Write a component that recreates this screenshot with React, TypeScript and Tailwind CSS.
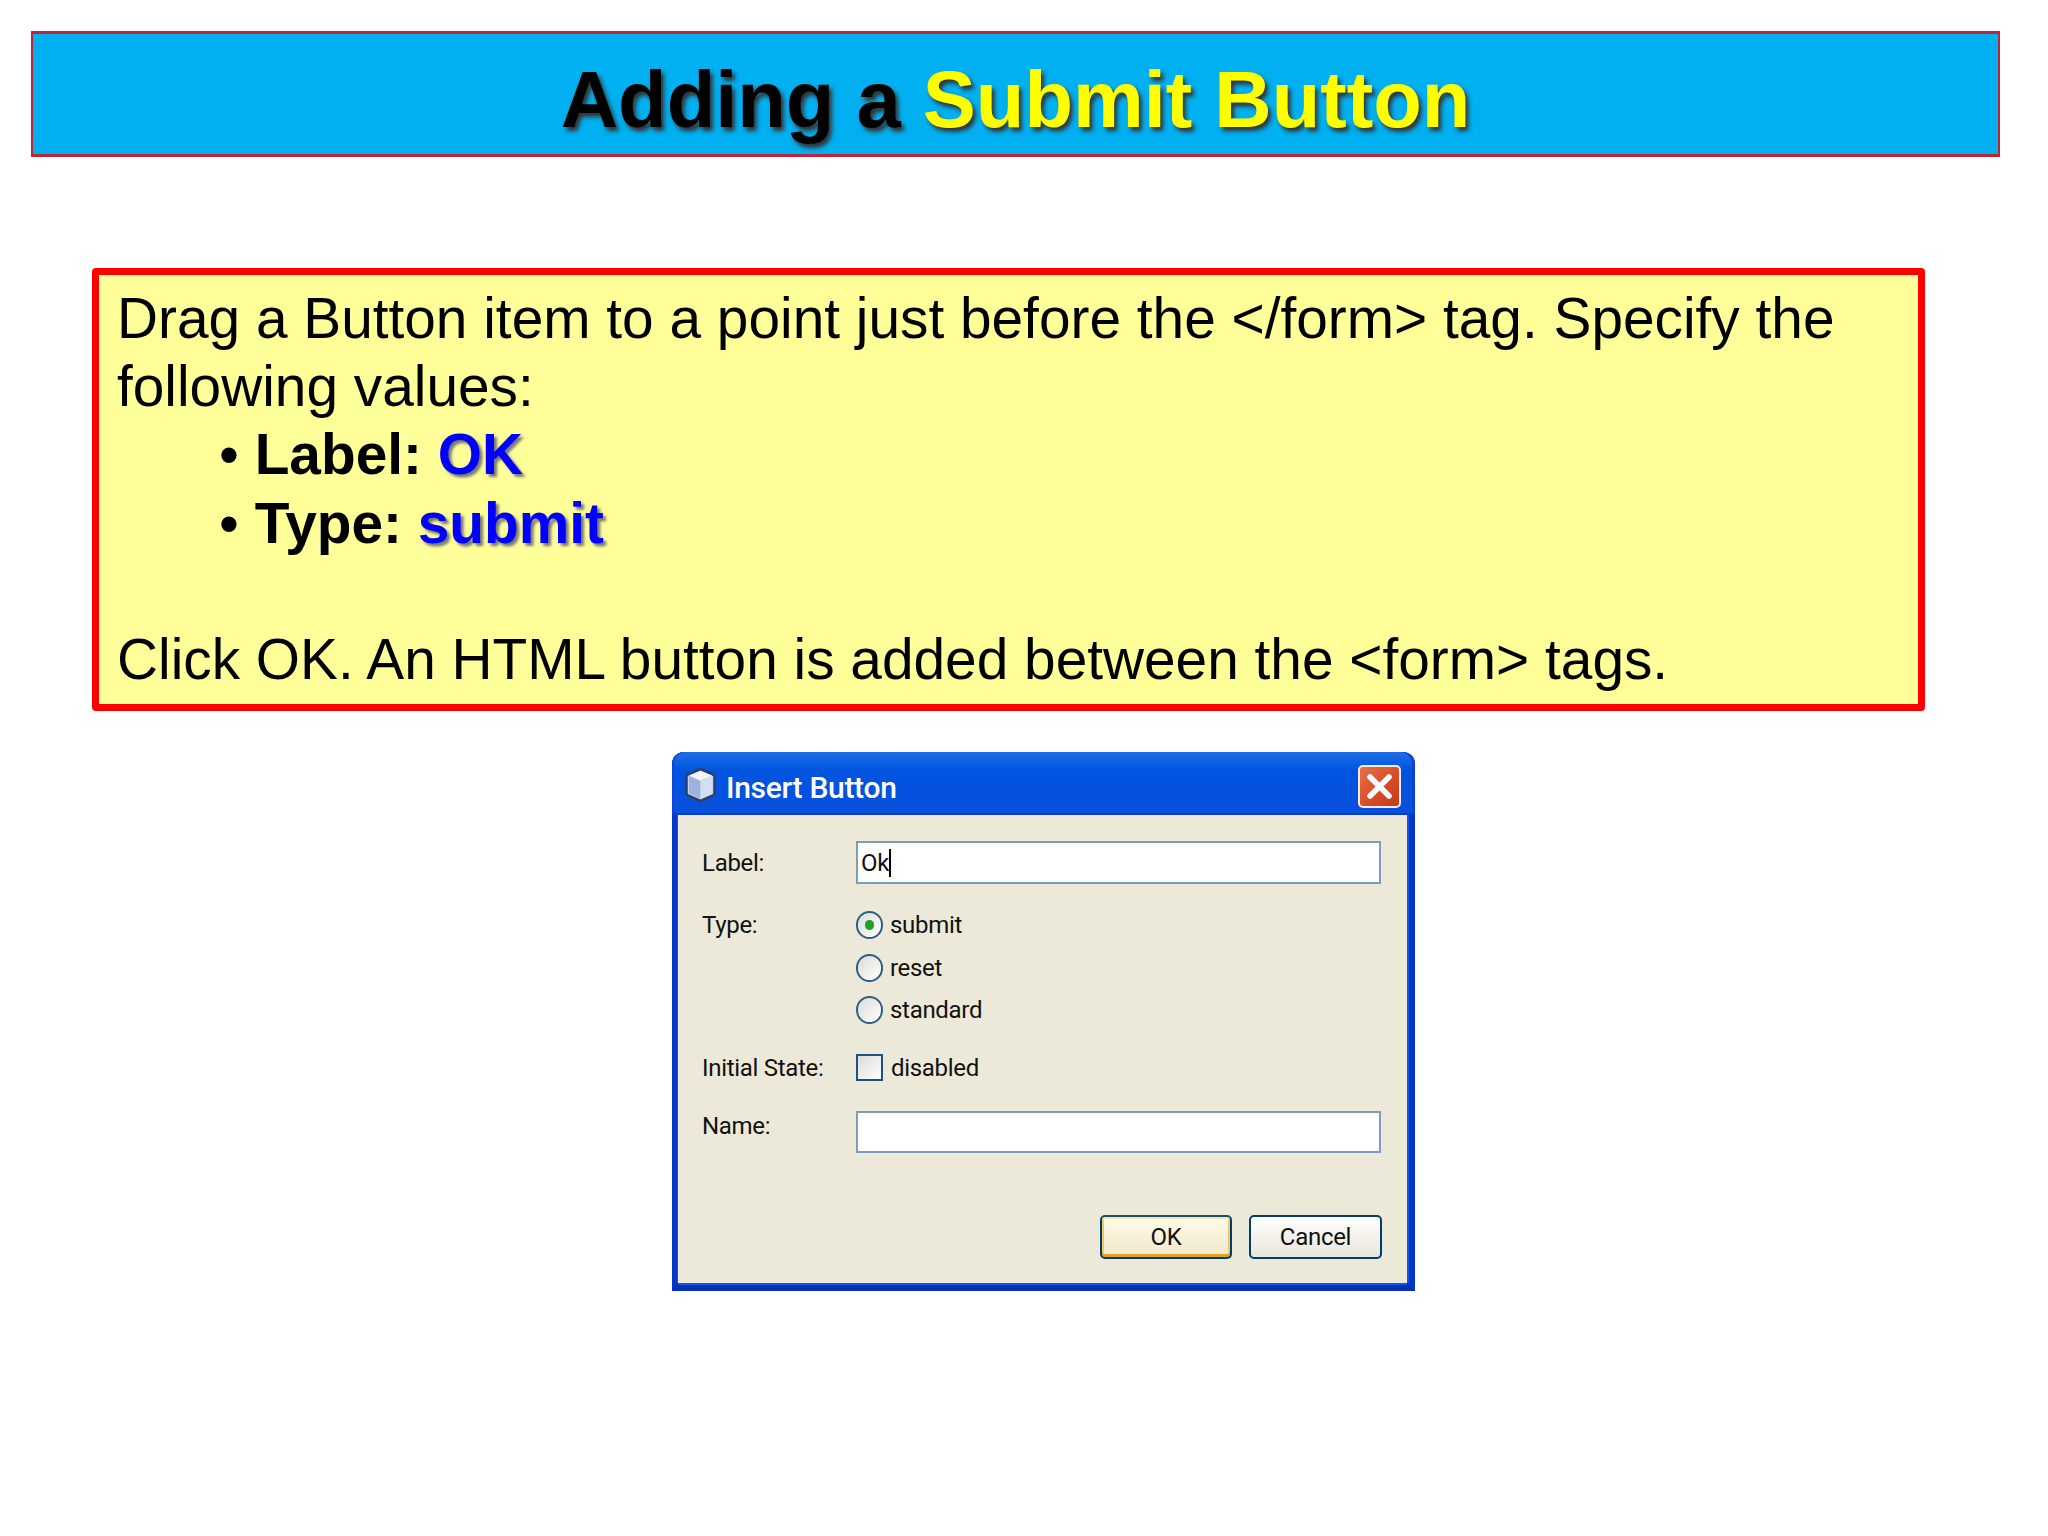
export default function App() {
  const shadow = "[text-shadow:3px_3px_3px_#777]";
  return (
    <div className="w-[2048px] h-[1536px] bg-white overflow-hidden pt-[31px] pl-[31px] font-['Liberation_Sans',Arial,sans-serif] text-black">
      <div className="w-[1969px] h-[126px] bg-[#00b0f0] border-y-[3px] border-x-2 border-[#c0243c] flex items-center justify-center">
        <h1 className="text-[79.5px] leading-[90px] font-bold [text-shadow:3px_4px_4px_#333] translate-y-[6px]">
          Adding a <span className="text-[#ffff00]">Submit Button</span>
        </h1>
      </div>

      <div className="mt-[111px] ml-[61px] w-[1833px] h-[443px] bg-[#ffff99] border-[7px] border-[#ff0000] rounded-[4px] pl-[18px] pt-[10px] text-[56.8px] leading-[68.2px] whitespace-nowrap">
        <div>Drag a Button item to a point just before the &lt;/form&gt; tag. Specify the</div>
        <div>following values:</div>
        <div className="pl-[102px] font-bold"><span className="font-normal">• </span>Label: <span className={`text-[#0000ff] ${shadow}`}>OK</span></div>
        <div className="pl-[102px] font-bold"><span className="font-normal">• </span>Type: <span className={`text-[#0000ff] ${shadow}`}>submit</span></div>
        <div className="h-[68px]" />
        <div>Click OK. An HTML button is added between the &lt;form&gt; tags.</div>
      </div>

      <div className="mt-[41px] ml-[641px] w-[743px] h-[539px] rounded-t-[12px] bg-[#0a56e0] border-l-[6px] border-r-[8px] border-b-[8px] border-x-[#0636c8] border-b-[#0430b8] flex flex-col font-['Roboto',Tahoma,sans-serif] text-[24px] tracking-[-0.3px] leading-[30px] text-[#111]">
        <div className="h-[63px] -ml-[6px] -mr-[8px] rounded-t-[12px] bg-gradient-to-b from-[#1f6fe8] from-0% via-[#0054e0] via-30% to-[#0a50dc] border-b-[2px] border-b-[#0a3fc0] shadow-[inset_-3px_0_0_#0a44d0,inset_2px_0_0_#0a48d4] flex items-center pl-[13px] pr-[14px]">
          <svg width="31" height="36" viewBox="0 0 31 36" className="shrink-0 translate-y-[2px]">
            <path d="M15.5 2 L28 7.5 C29 8 29.5 8.5 29.5 9.5 V26.5 C29.5 27.5 29 28 28 28.5 L15.5 34 L3 28.5 C2 28 1.5 27.5 1.5 26.5 V9.5 C1.5 8.5 2 8 3 7.5 Z" fill="#c4d2ee" stroke="#2c3f66" strokeWidth="2.5" strokeLinejoin="round" />
            <path d="M4 9 L15.5 14 V31.5 L4 26.5 Z" fill="#9fb2de" />
            <path d="M15.5 14 L27 9 V26.5 L15.5 31.5 Z" fill="#d3def3" />
            <path d="M4 8.5 L15.5 4 L27 8.5 L15.5 13.5 Z" fill="#f0f4fb" />
          </svg>
          <span className="ml-[10px] text-white font-medium text-[30px] tracking-[-0.3px] leading-none translate-y-[5px]">Insert Button</span>
          <div className="ml-auto w-[43px] h-[43px] translate-y-[4px] rounded-[5px] border-2 border-[#f4ede8] bg-gradient-to-br from-[#e86f48] via-[#d9502a] to-[#c03c18] flex items-center justify-center">
            <svg width="27" height="27" viewBox="0 0 27 27">
              <path d="M4 4 L23 23 M23 4 L4 23" stroke="#fff" strokeWidth="5.5" strokeLinecap="round" />
            </svg>
          </div>
        </div>

        <div className="flex-1 bg-[#ece9d8] shadow-[0_2px_0_0_#0a58ec,2px_0_0_0_#0a58ec,-1px_0_0_0_#0a58ec] pl-[24px] pr-[26px] pt-[26px]">
          <div className="flex items-center h-[43px]">
            <div className="w-[154px]">Label:</div>
            <div className="flex-1 h-full bg-white border-2 border-[#7f9db9] flex items-center pl-[3px]">
              <span>Ok</span>
              <span className="w-[2px] h-[28px] bg-black" />
            </div>
          </div>

          <div className="flex mt-[27px]">
            <div className="w-[154px] leading-[28px]">Type:</div>
            <div className="flex flex-col gap-[14.5px]">
              <Radio label="submit" checked />
              <Radio label="reset" />
              <Radio label="standard" />
            </div>
          </div>

          <div className="flex items-center h-[27px] mt-[30px]">
            <div className="w-[154px]">Initial State:</div>
            <div className="w-[27px] h-[27px] border-2 border-[#1c5180] bg-gradient-to-br from-[#dcdcd7] to-white" />
            <span className="ml-[8px]">disabled</span>
          </div>

          <div className="flex mt-[30px] h-[42px]">
            <div className="w-[154px]">Name:</div>
            <div className="flex-1 bg-white border-2 border-[#7f9db9]" />
          </div>

          <div className="flex justify-end gap-[17px] mt-[62px] -mr-[1px]">
            <button className="w-[132px] h-[44px] rounded-[5px] border-2 border-[#003c74] bg-gradient-to-b from-[#fffbe8] to-[#f0e8cc] border-t-[#1c4c80] shadow-[inset_0_-3px_0_#e5a21a,inset_0_2px_0_#ffe6a0,inset_2px_0_0_#f5c860,inset_-2px_0_0_#f5c860]">OK</button>
            <button className="w-[133px] h-[44px] rounded-[5px] border-2 border-[#003c74] bg-gradient-to-b from-white to-[#e8e6da]">Cancel</button>
          </div>
        </div>
      </div>
    </div>
  );
}

function Radio({ label, checked }: { label: string; checked?: boolean }) {
  return (
    <div className="flex items-center h-[28px]">
      <div className="w-[27px] h-[28px] rounded-full border-2 border-[#2f5f80] bg-gradient-to-br from-[#dcdcd7] to-white flex items-center justify-center">
        {checked && <div className="w-[9px] h-[10px] rounded-full bg-[#21a121]" />}
      </div>
      <span className="ml-[7px]">{label}</span>
    </div>
  );
}
